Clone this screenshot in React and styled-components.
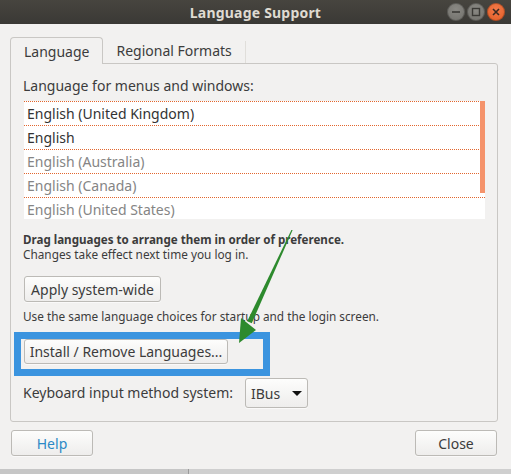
import React from 'react'
import styled, { createGlobalStyle } from 'styled-components'

const GlobalStyle = createGlobalStyle`
  html, body {
    margin: 0;
    padding: 0;
    background: #c4c4c4;
  }
  body {
    font-family: "Noto Sans", "DejaVu Sans", sans-serif;
    color: #3c3c3c;
  }
  * { box-sizing: border-box; }
`

const Window = styled.div`
  position: relative;
  width: 511px;
  height: 469px;
  background: #f2f1f0;
  display: flex;
  flex-direction: column;
`

const TitleBar = styled.div`
  height: 24px;
  display: grid;
  grid-template-columns: 1fr auto 1fr;
  align-items: center;
  background: linear-gradient(#47453f, #3a3935);
  color: #dfdbd2;
  font-weight: bold;
  font-size: 14px;
`

const Title = styled.div`
  grid-column: 2;
  letter-spacing: 0.2px;
`

const Controls = styled.div`
  grid-column: 3;
  justify-self: end;
  display: flex;
  gap: 2px;
  padding-right: 6px;
`

const CtrlButton = styled.div`
  width: 18px;
  height: 18px;
  border-radius: 50%;
  background: ${p => p.$close ? 'radial-gradient(circle at 50% 35%, #f27a4a, #e05a22)' : 'radial-gradient(circle at 50% 35%, #8a8984, #6f6e69)'};
  display: flex;
  align-items: center;
  justify-content: center;
  box-shadow: inset 0 0 0 1px rgba(0,0,0,0.25);
`

const Content = styled.div`
  padding: 13px 13px 0 10px;
  display: flex;
  flex-direction: column;
`

const Tabs = styled.div`
  display: flex;
  height: 26px;
`

const Tab = styled.div`
  display: flex;
  align-items: center;
  padding: 0 13px;
  font-size: 14px;
  position: relative;
  z-index: 1;
  ${p => p.$active ? `
    border: 1px solid #c9c7c4;
    border-bottom: none;
    border-radius: 4px 4px 0 0;
    background: #f2f1f0;
    margin-bottom: -1px;
    height: 27px;
  ` : `
    border-right: 1px solid #e0deda;
    height: 22px;
    align-self: flex-end;
    padding-bottom: 4px;
  `}
`

const Panel = styled.div`
  border: 1px solid #c9c7c4;
  border-radius: 0 3px 3px 3px;
  padding: 12px 12px 13px 12px;
  display: flex;
  flex-direction: column;
  align-items: flex-start;
`

const Label = styled.div`
  font-size: ${p => p.$small ? (p.$bold ? '11.6px' : '11.8px') : '14px'};
  line-height: ${p => p.$small ? '14px' : '20px'};
  font-weight: ${p => p.$bold ? 'bold' : 'normal'};
  margin-top: ${p => p.$mt || 0}px;
  white-space: nowrap;
`

const List = styled.div`
  position: relative;
  margin: 5px 0 0 1px;
  width: 461px;
  height: 118px;
  overflow: hidden;
  background: #ffffff;
`

const Row = styled.div`
  height: 24px;
  border-top: 1px dotted #e2662e;
  padding-left: 3px;
  display: flex;
  align-items: center;
  font-size: 14px;
  color: ${p => p.$dim ? '#858585' : '#333333'};
`

const Scrollbar = styled.div`
  position: absolute;
  top: 0;
  right: 0;
  width: 5px;
  height: 92px;
  background: #f5936b;
`

const Button = styled.button`
  font-family: inherit;
  font-size: 14px;
  color: ${p => p.$link ? '#2b89c6' : '#3c3c3c'};
  height: ${p => p.$h || 26}px;
  width: ${p => p.$w ? `${p.$w}px` : 'auto'};
  padding: 0;
  margin-top: ${p => p.$mt || 0}px;
  margin-left: ${p => p.$ml || 0}px;
  border: 1px solid #bcbab6;
  border-radius: 3px;
  background: linear-gradient(#fdfdfc, #eeedec);
  box-shadow: 0 1px 0 rgba(255,255,255,0.6);
  display: flex;
  align-items: center;
  justify-content: center;
  gap: 12px;
  white-space: nowrap;
  cursor: default;
`

const HighlightWrap = styled.div`
  position: relative;
  margin-top: 16px;
  margin-left: 1px;
`

const Highlight = styled.div`
  position: absolute;
  top: -7px;
  left: -10px;
  width: 256px;
  height: 44px;
  border: 7px solid #3b94df;
  pointer-events: none;
`

const InputRow = styled.div`
  display: flex;
  align-items: center;
  gap: 12px;
  margin-top: 14px;
`

const Caret = styled.span`
  width: 0;
  height: 0;
  border-left: 5px solid transparent;
  border-right: 5px solid transparent;
  border-top: 5px solid #111;
`

const Footer = styled.div`
  display: flex;
  justify-content: space-between;
  margin-top: 8px;
  padding: 0 1px 0 1px;
`

const BottomStrip = styled.div`
  height: 5px;
  background: linear-gradient(to right, #c6c6c6 188px, #9a9a9a 188px, #9a9a9a 189px, #cfcfcf 189px);
`

const Arrow = styled.svg`
  position: absolute;
  left: 0;
  top: 0;
  pointer-events: none;
`

const languages = [
  { name: 'English (United Kingdom)', dim: false },
  { name: 'English', dim: false },
  { name: 'English (Australia)', dim: true },
  { name: 'English (Canada)', dim: true },
  { name: 'English (United States)', dim: true },
]

export default function App() {
  return (
    <>
      <GlobalStyle />
      <Window>
        <TitleBar>
          <Title>Language Support</Title>
          <Controls>
            <CtrlButton>
              <svg width="10" height="10" viewBox="0 0 10 10"><path d="M1 5h8" stroke="#3b3a36" strokeWidth="1.6" /></svg>
            </CtrlButton>
            <CtrlButton>
              <svg width="10" height="10" viewBox="0 0 10 10"><rect x="1.5" y="1.5" width="7" height="7" fill="none" stroke="#3b3a36" strokeWidth="1.4" /></svg>
            </CtrlButton>
            <CtrlButton $close>
              <svg width="10" height="10" viewBox="0 0 10 10"><path d="M2 2l6 6M8 2l-6 6" stroke="#3b2a22" strokeWidth="1.6" /></svg>
            </CtrlButton>
          </Controls>
        </TitleBar>
        <Content>
          <Tabs>
            <Tab $active>Language</Tab>
            <Tab>Regional Formats</Tab>
          </Tabs>
          <Panel>
            <Label>Language for menus and windows:</Label>
            <List>
              {languages.map(l => (
                <Row key={l.name} $dim={l.dim}>{l.name}</Row>
              ))}
              <Scrollbar />
            </List>
            <Label $small $bold $mt={14}>Drag languages to arrange them in order of preference.</Label>
            <Label $small>Changes take effect next time you log in.</Label>
            <Button $mt={15} $ml={1} $w={137}>Apply system-wide</Button>
            <Label $small $mt={7}>Use the same language choices for startup and the login screen.</Label>
            <HighlightWrap>
              <Button $h={25} $w={204}>Install / Remove Languages...</Button>
              <Highlight />
            </HighlightWrap>
            <InputRow>
              <Label>Keyboard input method system:</Label>
              <Button $h={30} $w={63}>IBus<Caret /></Button>
            </InputRow>
          </Panel>
          <Footer>
            <Button $link $w={82}>Help</Button>
            <Button $w={82}>Close</Button>
          </Footer>
        </Content>
        <Arrow width="511" height="469" viewBox="0 0 511 469">
          <polygon points="291.4,230 292.6,230 251.8,323.3 247.2,321.3" fill="#2d8a2d" />
          <polygon points="239,343 241,318 256,330" fill="#2d8a2d" />
        </Arrow>
      </Window>
      <BottomStrip />
    </>
  )
}
